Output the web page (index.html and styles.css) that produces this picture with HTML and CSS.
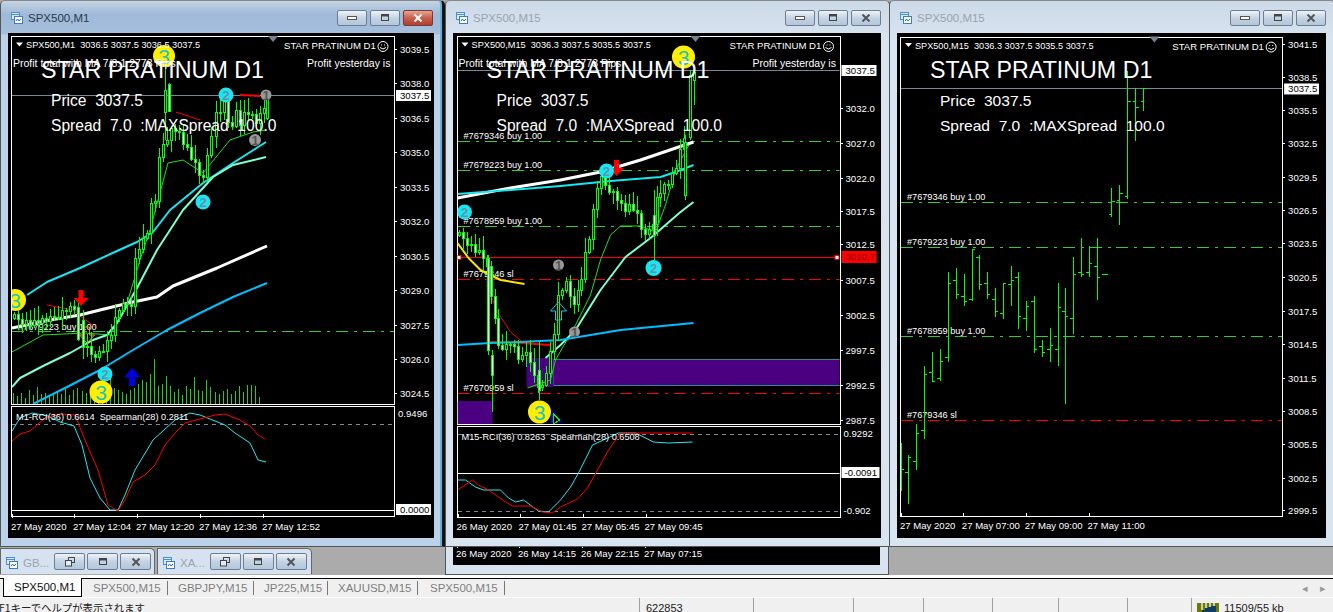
FILE: index.html

```html
<!DOCTYPE html>
<html lang="ja">
<head>
    <meta charset="UTF-8">
    <meta name="viewport" content="width=device-width, initial-scale=1.0">
    <title>SPX500 charts</title>
    <link rel="stylesheet" href="styles.css">
</head>
<body>
    <svg class="defs">
        <symbol id="win-icon" viewBox="0 0 12 12">
            <rect x="0.5" y="0.5" width="8" height="7" fill="#dfeaf7" stroke="#4a8fd0"/>
            <rect x="3.5" y="4.5" width="8" height="7" fill="#ffffff" stroke="#3a7fc4"/>
            <path d="M0.5 2.5h8" stroke="#4a8fd0"/>
            <path d="M5 9l1.5-2 1.5 2 2-2" fill="none" stroke="#2f6db0"/>
        </symbol>
        <symbol id="ic-min" viewBox="0 0 12 8"><rect x="1.5" y="2.5" width="9" height="3" fill="#fff" stroke="#555"/></symbol>
        <symbol id="ic-max" viewBox="0 0 12 8"><rect x="2.5" y="0.5" width="7" height="6" fill="none" stroke="#444"/><rect x="3" y="1" width="6" height="1.5" fill="#444"/></symbol>
        <symbol id="ic-close" viewBox="0 0 12 8"><path d="M2.5 0.5l7 7M9.5 0.5l-7 7" stroke="#555" stroke-width="2"/></symbol>
        <symbol id="ic-restore" viewBox="0 0 12 10"><rect x="4.5" y="0.5" width="6" height="5" fill="none" stroke="#444"/><rect x="1.5" y="3.5" width="6" height="5.5" fill="#e4edf6" stroke="#444"/></symbol>
    </svg>

    <div class="desktop">
        <div class="behind">
            <svg class="strip" id="strip2" viewBox="453 547 427 18"></svg>
        </div>

        <div class="window active win1">
            <div class="titlebar">
                <svg class="wicon"><use href="#win-icon"/></svg>
                <span class="wtitle">SPX500,M1</span>
                <div class="wbtns">
                    <span class="wbtn"><svg><use href="#ic-min"/></svg></span>
                    <span class="wbtn"><svg><use href="#ic-max"/></svg></span>
                    <span class="wbtn close"><svg><use href="#ic-close"/></svg></span>
                </div>
            </div>
            <svg class="chart" id="chart1" viewBox="8 33 426 505"></svg>
        </div>

        <div class="window win2">
            <div class="titlebar">
                <svg class="wicon"><use href="#win-icon"/></svg>
                <span class="wtitle">SPX500,M15</span>
                <div class="wbtns">
                    <span class="wbtn"><svg><use href="#ic-min"/></svg></span>
                    <span class="wbtn"><svg><use href="#ic-max"/></svg></span>
                    <span class="wbtn"><svg><use href="#ic-close"/></svg></span>
                </div>
            </div>
            <svg class="chart" id="chart2" viewBox="453 33 427 505"></svg>
        </div>

        <div class="window win3">
            <div class="titlebar">
                <svg class="wicon"><use href="#win-icon"/></svg>
                <span class="wtitle">SPX500,M15</span>
                <div class="wbtns">
                    <span class="wbtn"><svg><use href="#ic-min"/></svg></span>
                    <span class="wbtn"><svg><use href="#ic-max"/></svg></span>
                    <span class="wbtn"><svg><use href="#ic-close"/></svg></span>
                </div>
            </div>
            <svg class="chart" id="chart3" viewBox="898 33 430 505"></svg>
        </div>

        <div class="minimized">
            <div class="minwin">
                <svg class="wicon"><use href="#win-icon"/></svg>
                <span class="wtitle">GB...</span>
                <div class="wbtns">
                    <span class="wbtn"><svg><use href="#ic-restore"/></svg></span>
                    <span class="wbtn"><svg><use href="#ic-max"/></svg></span>
                    <span class="wbtn"><svg><use href="#ic-close"/></svg></span>
                </div>
            </div>
            <div class="minwin">
                <svg class="wicon"><use href="#win-icon"/></svg>
                <span class="wtitle">XA...</span>
                <div class="wbtns">
                    <span class="wbtn"><svg><use href="#ic-restore"/></svg></span>
                    <span class="wbtn"><svg><use href="#ic-max"/></svg></span>
                    <span class="wbtn"><svg><use href="#ic-close"/></svg></span>
                </div>
            </div>
        </div>
    </div>

    <div class="tabs">
        <span class="tab current">SPX500,M1</span>
        <span class="tab t1">SPX500,M15</span>
        <span class="tab t2">GBPJPY,M15</span>
        <span class="tab t3">JP225,M15</span>
        <span class="tab t4">XAUUSD,M15</span>
        <span class="tab t5">SPX500,M15</span>
        <span class="scroll">◂</span>
        <span class="scroll">▸</span>
    </div>

    <div class="status">
        <span class="cell help">F1キーでヘルプが表示されます</span>
        <span class="cell c1">622853</span>
        <span class="cell c2"></span>
        <span class="cell c3"></span>
        <span class="cell c4"></span>
        <span class="cell c5"></span>
        <span class="cell c6"></span>
        <span class="cell c7"></span>
        <span class="cell conn">
            <svg class="bars" viewBox="0 0 22 10">
                <rect x="0" y="0" width="22" height="10" fill="#6b7a00"/>
                <path d="M5 0v7M9 0v5M13 0v4M17 0v3" stroke="#e8e8e8" stroke-width="1.5"/>
                <path d="M5 10v-3h3v-2h3v-1h3v-1h5v7z" fill="#0f3d66"/>
            </svg>
            11509/55 kb
        </span>
    </div>

    <script src="script.js"></script>
</body>
</html>
```

FILE: styles.css

```css
html, body {margin: 0; padding: 0; width: 1333px; height: 612px; overflow: hidden; background: #f0f0f0;}
body {font-family: "Liberation Sans", Arial, sans-serif; font-size: 11px; color: #222;}
.defs {position: absolute; width: 0; height: 0;}

.desktop {position: relative; height: 575px; background: #ababab; border-bottom: 3px solid #fff; box-sizing: content-box;}

.window {position: absolute; top: 0; height: 547px; box-sizing: border-box; display: flex; flex-direction: column; background: linear-gradient(#ccd9e6 0, #d9e4f1 40px); border: 1px solid #555; border-top-color: #888; border-radius: 5px 5px 0 0; padding: 0 8px 8px 7px;}
.window.active {background: linear-gradient(#c3d3e3 0, #9fb9d8 14px, #a6bfdc 33px, #bcd2ea 34px); border-right: 3px solid #111; box-shadow: inset -2px 0 0 #58b7dc;}
.win1 {left: 0; width: 445px;}
.win2 {left: 445px; width: 445px;}
.win3 {left: 889px; width: 446px;}

.titlebar {flex: none; height: 32px; display: flex; align-items: center; gap: 5px; padding-left: 3px;}
.wicon {width: 12px; height: 12px; flex: none; margin-top: 2px;}
.wtitle {font-size: 11.5px; color: #9aa4ae; margin-top: 2px;}
.active .wtitle {color: #2b3a48;}
.wbtns {display: flex; gap: 3px; margin-left: auto; margin-top: 9px; margin-bottom: 7px;}
.win1 .wbtns {margin-right: 1px;}
.wbtn {width: 30px; height: 16px; display: flex; align-items: center; justify-content: center; border: 1px solid #6c7e93; border-radius: 2px; box-sizing: border-box; background: linear-gradient(#eef3f8, #c4d3e3 50%, #b4c6da);}
.wbtn svg {width: 12px; height: 8px;}
.wbtn.close {background: linear-gradient(#e6a593, #c8604c 50%, #ad3f30); border-color: #7a3a32;}
.wbtn.close svg {filter: brightness(3);}

.chart {flex: none; display: block; width: 100%; height: 505px; background: #000;}
.chart text, .strip text {font-family: "Liberation Sans", Arial, sans-serif; font-size: 9.6px; fill: #fff; white-space: pre;}
.chart text.big {font-size: 23.3px;}
.chart text.mid {font-size: 15.6px;}
.chart text.tight {font-size: 9.2px;}
.chart text.prof {font-size: 10.5px;}
.chart text.dark {fill: #000;}
.chart text.num {font-size: 13px; font-weight: bold; text-anchor: middle;}
.chart text.num3 {font-size: 21px; fill: #16c6c6; text-anchor: middle;}

.behind {position: absolute; left: 445px; top: 546px; width: 444px; height: 29px; box-sizing: border-box; background: #d9e4f1; border: 1px solid #555; border-top-color: #444; padding: 0 8px 9px 7px;}
.strip {display: block; width: 427px; height: 18px; background: #000;}

.frame {fill: none; stroke: #fff; shape-rendering: crispEdges;}
.tick {stroke: #fff; shape-rendering: crispEdges;}
.pline {fill: none; stroke-linejoin: round;}
.thin-lime {stroke: #22dd22; stroke-width: 1;}
.thin-red {stroke: #ff0000; stroke-width: 1;}
.cyan {stroke: #18e6f0; stroke-width: 2;}
.mint {stroke: #7fffd4; stroke-width: 2;}
.white {stroke: #fff; stroke-width: 3;}
.blue {stroke: #00bfff; stroke-width: 2;}
.yellow {stroke: #ffe600; stroke-width: 2;}
.red-fat {stroke: #ff0000; stroke-width: 2;}
.sub-cyan {stroke: #28e8f0; stroke-width: 1;}
.sub-red {stroke: #ff0000; stroke-width: 1;}
.price {stroke: #778899; shape-rendering: crispEdges;}
.hline-w {stroke: #fff; shape-rendering: crispEdges;}
.dash-g {stroke: #32cd32; stroke-dasharray: 12 6 3 6; shape-rendering: crispEdges;}
.dash-r {stroke: #ff0000; stroke-dasharray: 12 6 3 6; shape-rendering: crispEdges;}
.dash-k {stroke: #778899; stroke-dasharray: 4 4; shape-rendering: crispEdges;}
.solid-r {stroke: #ff0000; shape-rendering: crispEdges;}
.wick {stroke: #00ff00; shape-rendering: crispEdges;}
.vol {stroke: #22cc22; shape-rendering: crispEdges;}
.up {fill: #000; stroke: #00ff00; shape-rendering: crispEdges;}
.down {fill: #fff; stroke: #00ff00; shape-rendering: crispEdges;}
.zone {fill: #4b0082;}
.zone-edge {fill: #4b0082; stroke: #2e8b8b; shape-rendering: crispEdges;}
.box {fill: #fff;}
.box-red {fill: #ff0000;}
.handle {fill: #fff; stroke: #ff0000;}
.m-yellow {fill: #ffee00;}
.m-cyan {fill: #18e6f0;}
.m-grey {fill: #999;}
.smile {fill: none; stroke: #fff;}
.tri-w {fill: #fff;}
.tri-g {fill: #76838f;}
.a-red {fill: #ff0000;}
.a-blue {fill: #0000e0;}
.a-hollow-y {fill: none; stroke: #d8a020;}
.a-hollow-c {fill: none; stroke: #18c8f0;}

.minimized {position: absolute; left: 0; top: 548px; display: flex; gap: 2px;}
.minwin {width: 155px; height: 26px; box-sizing: border-box; display: flex; align-items: center; gap: 5px; padding: 0 4px 0 5px; background: #d6e2ef; border: 1px solid #666; border-bottom: 0; border-radius: 0 5px 0 0;}
.minwin .wbtns {margin: 0; gap: 2px;}
.minwin .wbtn {width: 31px; height: 17px;}
.minwin .wbtn svg {height: 10px;}

.tabs {position: relative; height: 18px; border-top: 1px solid #000; display: flex; align-items: center; background: #f0f0f0;}
.tab {position: absolute; top: 2px; height: 14px; line-height: 14px; font-size: 11.5px; color: #7f7f7f; padding-left: 10px; border-right: 1px solid #777;}
.tab.current {left: 3px; top: -1px; width: 67px; height: 18px; line-height: 19px; color: #111; background: #fff; border: 1px solid #000; border-top: 0; padding-left: 10px;}
.t1 {left: 83px; width: 74px;}
.t2 {left: 168px; width: 75px;}
.t3 {left: 254px; width: 63px;}
.t4 {left: 328px; width: 79px;}
.t5 {left: 420px; width: 74px;}
.scroll {position: absolute; top: 2px; font-size: 11px; color: #999; line-height: 14px;}
.scroll:nth-last-child(2) {left: 1302px;}
.scroll:last-child {left: 1320px;}

.status {position: relative; height: 15px; border-top: 1px solid #fff; background: #f0f0f0; overflow: hidden; border-bottom: 1px solid #666;}
.cell {position: absolute; top: 0; height: 15px; line-height: 21px; white-space: nowrap; border-left: 1px solid #a0a0a0; box-sizing: border-box; font-size: 11px;}
.cell.help {left: -1px; border-left: 0; font-family: "Noto Sans CJK JP", sans-serif; font-size: 10.4px; line-height: 20px;}
.c1 {left: 639px; width: 114px; padding-left: 6px;}
.c2 {left: 753px;}
.c3 {left: 853px;}
.c4 {left: 923px;}
.c5 {left: 992px;}
.c6 {left: 1058px;}
.c7 {left: 1127px;}
.conn {left: 1191px; padding-left: 5px; display: flex; gap: 5px; align-items: flex-start;}
.bars {width: 22px; height: 10px; margin-top: 5px; flex: none;}
```

FILE: script.js

```js
const NS = "http://www.w3.org/2000/svg";

function add(svg, tag, attrs, text) {
    const el = document.createElementNS(NS, tag);
    for (const k in attrs) el.setAttribute(k, attrs[k]);
    if (text !== undefined) el.textContent = text;
    svg.appendChild(el);
    return el;
}

function poly(svg, pts, cls) {
    add(svg, "polyline", { points: pts.map(p => p.join(",")).join(" "), class: "pline " + cls });
}

function hline(svg, x1, x2, y, cls) {
    add(svg, "line", { x1: x1, x2: x2, y1: y + 0.5, y2: y + 0.5, class: cls });
}

function label(svg, x, y, str, cls) {
    add(svg, "text", { x: x, y: y, class: cls || "" }, str);
}

// candles from a rough price path, plus a wick out of a small hash
function pathCandles(path, x0, x1, step) {
    const out = [];
    let prev = path[0][1];
    let i = 0;
    for (let x = x0; x <= x1; x += step) {
        let s = 0;
        while (s < path.length - 2 && path[s + 1][0] < x) s++;
        const a = path[s], b = path[s + 1];
        const c = Math.round(a[1] + (b[1] - a[1]) * (x - a[0]) / (b[0] - a[0]));
        const h = (i * 7919) % 13, l = (i * 104729) % 11;
        const jig = ((i * 31) % 9) - 4;
        const close = c + jig;
        out.push([x, Math.min(prev, close) - 2 - h, Math.max(prev, close) + 2 + l, prev, close]);
        prev = close;
        i++;
    }
    return out;
}

function drawCandles(svg, list) {
    list.forEach(c => {
        const x = Math.round(c[0]) + 0.5;
        add(svg, "line", { x1: x, x2: x, y1: c[1], y2: c[2], class: "wick" });
        const top = Math.min(c[3], c[4]), bot = Math.max(c[3], c[4]);
        add(svg, "rect", { x: x - 1, y: top + 0.5, width: 2, height: Math.max(bot - top, 1), class: c[4] > c[3] ? "down" : "up" });
    });
}

function drawBars(svg, list) {
    list.forEach(c => {
        const x = Math.round(c[0]) + 0.5;
        add(svg, "line", { x1: x, x2: x, y1: c[1], y2: c[2], class: "wick" });
        add(svg, "line", { x1: x - 3, x2: x, y1: c[3] + 0.5, y2: c[3] + 0.5, class: "wick" });
        add(svg, "line", { x1: x, x2: x + 3, y1: c[4] + 0.5, y2: c[4] + 0.5, class: "wick" });
    });
}

function marker(svg, x, y, r, kind, n) {
    add(svg, "circle", { cx: x, cy: y, r: r, class: "m-" + kind });
    if (kind === "yellow") label(svg, x, y + 7.5, n, "num3");
    else add(svg, "text", { x: x, y: y + 4.5, class: "num", style: "fill:" + (kind === "grey" ? "#555" : "#6a8fa8") }, n);
}

function arrowDown(svg, x, y, cls) {
    add(svg, "path", { d: `M${x - 2.5} ${y}h5v8h5l-7.5 8-7.5-8h5z`, class: cls });
}

function arrowUp(svg, x, y, cls) {
    add(svg, "path", { d: `M${x} ${y}l8 9h-5v9h-6v-9h-5z`, class: cls });
}

function axis(svg, right, list) {
    list.forEach(a => {
        hline(svg, right, right + 3, a[1], "tick");
        label(svg, right + 6, a[1] + 4, a[0]);
    });
}

function timeAxis(svg, y, list) {
    list.forEach(t => {
        add(svg, "line", { x1: t[0] + 0.5, x2: t[0] + 0.5, y1: y - 3, y2: y + 1, class: "tick" });
        label(svg, t[0] - 1, y + 13, t[1]);
    });
}

// what all three charts share on top of the data
function overlay(svg, o) {
    const l = o.left;
    add(svg, "path", { d: `M${l + 5} 42.5h7l-3.5 4z`, class: "tri-w" });
    label(svg, l + 15, 48, o.head, "tight");
    add(svg, "path", { d: `M${o.notch - 5} 36h10l-5 6z`, class: "tri-g" });
    label(svg, o.right - 110, 49, "STAR PRATINUM D1");
    add(svg, "circle", { cx: o.right - 11, cy: 46.5, r: 5, class: "smile" });
    add(svg, "path", { d: `M${o.right - 14} 47.5q3 3 6 0M${o.right - 13} 45h1M${o.right - 10} 45h1`, class: "smile" });
    if (o.profit) {
        label(svg, l + 2, 67, "Profit total with MA 7/8.1 2773 Pips", "prof");
        add(svg, "text", { x: l + 296, y: 67, class: "prof", "clip-path": `url(#${svg.id}-main)` }, "Profit yesterday is");
    }
    label(svg, l + 30, 78, "STAR PRATINUM D1", "big");
    label(svg, l + 40, 106, "Price  3037.5", "mid");
    label(svg, l + 40, 131, "Spread  7.0  :MAXSpread  100.0", "mid");
}

function clip(svg, id, x, y, w, h) {
    const c = add(svg, "clipPath", { id: svg.id + id });
    add(c, "rect", { x: x, y: y, width: w, height: h });
    return `url(#${svg.id + id})`;
}

function group(svg, clipUrl) {
    return add(svg, "g", { "clip-path": clipUrl });
}

/* ---------- chart 1, SPX500,M1 ---------- */
const c1 = document.getElementById("chart1");
const c1main = clip(c1, "-main", 12, 37, 382, 367);

add(c1, "rect", { x: 11.5, y: 36.5, width: 383, height: 368, class: "frame" });
add(c1, "rect", { x: 11.5, y: 406.5, width: 383, height: 110, class: "frame" });

const g1 = group(c1, c1main);
hline(g1, 12, 394, 95, "price");
hline(g1, 12, 394, 331, "dash-g");
label(g1, 18, 330, "#7679223 buy 1.00", "tight");

const vols = [11, 8, 11, 6, 14, 9, 17, 10, 11, 8, 9, 12, 10, 15, 9, 14, 16, 13, 11, 9, 7, 20, 14, 12, 28, 16, 14, 12, 10, 14, 16, 20, 24, 22, 30, 45, 18, 20, 28, 18, 12, 15, 9, 18, 15, 27, 14, 13, 24, 17, 12, 10, 13, 15, 10, 13, 18, 12, 19, 19, 18, 7];
vols.forEach((v, i) => {
    const x = 13.5 + Math.round(i * 4.03);
    add(g1, "line", { x1: x, x2: x, y1: 404, y2: 404 - v, class: "vol" });
});

poly(g1, [[12, 352], [43, 335], [85, 333], [110, 335], [125, 310], [140, 260], [150, 230], [168, 163], [183, 160], [203, 173], [230, 140], [253, 132], [266, 130]], "thin-lime");
poly(g1, [[47, 305], [73, 310], [83, 318], [95, 327]], "thin-red");
poly(g1, [[176, 112], [200, 120]], "thin-red");
poly(g1, [[240, 95], [260, 96]], "red-fat");
poly(g1, [[27, 295], [47, 282], [80, 268], [117, 251], [137, 242], [153, 232], [170, 210], [203, 183], [233, 163], [266, 142]], "cyan");
poly(g1, [[12, 387], [20, 378], [45, 365], [70, 353], [93, 340], [107, 335], [117, 323], [137, 288], [157, 250], [183, 210], [213, 177], [233, 165], [266, 157]], "mint");
poly(g1, [[12, 328], [50, 320], [80, 315], [100, 310], [133, 302], [157, 297], [173, 286], [217, 268], [267, 246]], "white");
poly(g1, [[33, 404], [67, 387], [100, 370], [133, 350], [167, 330], [200, 313], [233, 297], [267, 283]], "blue");

const path1 = [[14, 318], [30, 322], [50, 320], [66, 308], [76, 307], [82, 345], [90, 354], [100, 352], [105, 345], [110, 335], [118, 310], [125, 305], [131, 302], [134, 262], [140, 242], [146, 238], [150, 208], [156, 198], [160, 150], [173, 125], [180, 135], [185, 145], [190, 155], [195, 165], [200, 176], [205, 172], [210, 140], [215, 115], [220, 110], [225, 100], [230, 140], [235, 108], [240, 122], [245, 110], [250, 112], [255, 122], [260, 116], [267, 100]];
drawCandles(g1, pathCandles(path1, 14, 267, 4.03));
drawCandles(g1, [[78, 303, 341, 307, 339], [165, 62, 140, 112, 90], [169, 83, 112, 84, 111], [267, 95, 120, 118, 96]]);

arrowDown(g1, 81, 290, "a-red");
arrowUp(g1, 132, 368, "a-blue");
arrowDown(g1, 87, 327, "a-hollow-y");
marker(g1, 164, 56, 11, "yellow", "3");
marker(g1, 226, 95, 7.5, "cyan", "2");
marker(g1, 266, 95, 5.5, "grey", "1");
marker(g1, 255, 140, 6, "grey", "1");
marker(g1, 203, 202, 7.5, "cyan", "2");
marker(g1, 15, 300, 11, "yellow", "3");
marker(g1, 105, 374, 7.5, "cyan", "2");
marker(g1, 101, 392, 11.5, "yellow", "3");

const sub1 = group(c1, clip(c1, "-sub", 12, 407, 382, 110));
hline(sub1, 12, 394, 424, "dash-k");
hline(sub1, 12, 394, 510, "hline-w");
poly(sub1, [[12, 431], [20, 418], [32, 413], [48, 416], [60, 422], [74, 426], [82, 445], [90, 478], [100, 498], [110, 510], [118, 510], [125, 495], [135, 470], [153, 440], [175, 420], [190, 413], [200, 415], [225, 425], [235, 433], [250, 443], [258, 460], [266, 462]], "sub-cyan");
poly(sub1, [[12, 441], [20, 434], [30, 431], [45, 418], [60, 414], [75, 415], [85, 440], [98, 470], [108, 505], [118, 511], [125, 500], [133, 482], [145, 475], [155, 465], [165, 445], [175, 433], [185, 423], [200, 419], [215, 415], [225, 414], [240, 420], [250, 426], [258, 435], [265, 439]], "sub-red");
label(sub1, 16, 420, "M1-RCI(36) 0.6614  Spearman(28) 0.2811", "tight");

overlay(c1, { left: 11, right: 394, notch: 273, head: "SPX500,M1  3036.5 3037.5 3036.5 3037.5", profit: true });
axis(c1, 394, [["3039.5", 49], ["3038.0", 83], ["3036.5", 118], ["3035.0", 152], ["3033.5", 187], ["3032.0", 221], ["3030.5", 256], ["3029.0", 290], ["3027.5", 325], ["3026.0", 359], ["3024.5", 393]]);
add(c1, "rect", { x: 396, y: 90, width: 35, height: 11, class: "box" });
label(c1, 400, 99, "3037.5", "dark");
label(c1, 398, 417, "0.9496");
add(c1, "rect", { x: 396, y: 504, width: 35, height: 11, class: "box" });
label(c1, 400, 513, "0.0000", "dark");
timeAxis(c1, 517, [[12, "27 May 2020"], [74, "27 May 12:04"], [137, "27 May 12:20"], [200, "27 May 12:36"], [263, "27 May 12:52"]]);

/* ---------- chart 2, SPX500,M15 ---------- */
const c2 = document.getElementById("chart2");
const c2main = clip(c2, "-main", 457, 37, 382, 387);

add(c2, "rect", { x: 456.5, y: 36.5, width: 383, height: 388, class: "frame" });
add(c2, "rect", { x: 456.5, y: 426.5, width: 383, height: 91, class: "frame" });

const g2 = group(c2, c2main);
add(g2, "rect", { x: 552.5, y: 359.5, width: 287, height: 26, class: "zone-edge" });
add(g2, "rect", { x: 526, y: 358, width: 27, height: 29, class: "zone" });
add(g2, "rect", { x: 457, y: 401, width: 35, height: 23, class: "zone" });
hline(g2, 457, 839, 70, "price");
hline(g2, 457, 839, 141, "dash-g");
hline(g2, 457, 839, 170, "dash-g");
hline(g2, 457, 839, 226, "dash-g");
hline(g2, 457, 839, 257, "solid-r");
hline(g2, 457, 839, 279, "dash-r");
hline(g2, 457, 839, 393, "dash-r");
label(g2, 463, 139, "#7679346 buy 1.00", "tight");
label(g2, 463, 168, "#7679223 buy 1.00", "tight");
label(g2, 463, 224, "#7678959 buy 1.00", "tight");
label(g2, 463, 277, "#7679346 sl", "tight");
label(g2, 463, 391, "#7670959 sl", "tight");
add(g2, "rect", { x: 456.5, y: 255.5, width: 4, height: 4, class: "handle" });
add(g2, "rect", { x: 834.5, y: 255.5, width: 4, height: 4, class: "handle" });

poly(g2, [[457, 243], [468, 258], [480, 270], [500, 280], [524, 284]], "yellow");
poly(g2, [[486, 285], [497, 312], [510, 332], [522, 342]], "thin-red");
poly(g2, [[488, 342], [520, 343], [550, 345]], "red-fat");
poly(g2, [[527, 388], [550, 380], [555, 360], [575, 325], [590, 295], [600, 260], [610, 235], [620, 226], [640, 226], [655, 232], [665, 205], [675, 170], [690, 142]], "thin-lime");
poly(g2, [[457, 198], [510, 188], [560, 180], [600, 172], [640, 160], [693, 142]], "white");
poly(g2, [[457, 194], [510, 190], [560, 186], [610, 181], [660, 177], [675, 172], [693, 165]], "cyan");
poly(g2, [[545, 358], [560, 345], [575, 330], [600, 290], [625, 257], [650, 238], [680, 212], [693, 202]], "mint");
poly(g2, [[457, 345], [490, 343], [520, 342], [560, 340], [620, 330], [693, 323]], "blue");

const path2 = [[457, 235], [465, 240], [475, 250], [484, 258], [497, 345], [505, 345], [510, 340], [516, 355], [520, 360], [525, 350], [530, 370], [535, 378], [540, 390], [545, 370], [552, 340], [556, 300], [560, 290], [565, 285], [570, 300], [574, 300], [578, 285], [582, 270], [585, 250], [590, 230], [595, 190], [600, 180], [604, 185], [610, 190], [615, 195], [620, 205], [625, 210], [630, 205], [635, 215], [640, 230], [650, 230], [655, 200], [660, 190], [665, 185], [670, 180], [675, 170], [680, 140], [685, 138]];
drawCandles(g2, pathCandles(path2, 458, 686, 3.95));
drawCandles(g2, [[487, 255, 355, 258, 350], [491, 350, 412, 355, 375], [538, 342, 400, 370, 390], [653, 190, 262, 215, 235], [684, 135, 200, 195, 142], [689, 70, 140, 137, 75], [693, 68, 105, 80, 72]]);

arrowDown(g2, 616, 160, "a-red");
arrowUp(g2, 558, 302, "a-hollow-c");
add(g2, "path", { d: "M550 408l12 14-12 2z", class: "a-blue" });
add(g2, "path", { d: "M553 414l6 6-6 4z", class: "wick" });
marker(g2, 683, 57, 11.5, "yellow", "3");
marker(g2, 606, 171, 7.5, "cyan", "2");
marker(g2, 464, 212, 7.5, "cyan", "2");
marker(g2, 558, 265, 5.5, "grey", "1");
marker(g2, 574, 332, 5.5, "grey", "1");
marker(g2, 653, 268, 8, "cyan", "2");
marker(g2, 539, 412, 11.5, "yellow", "3");

const sub2 = group(c2, clip(c2, "-sub", 457, 427, 382, 91));
hline(sub2, 457, 839, 434, "dash-k");
hline(sub2, 457, 839, 511, "dash-k");
hline(sub2, 457, 839, 473, "hline-w");
poly(sub2, [[457, 480], [465, 480], [475, 487], [483, 490], [500, 490], [508, 498], [515, 502], [523, 500], [538, 511], [548, 512], [560, 500], [570, 487], [578, 473], [592, 445], [605, 439], [618, 433], [635, 433], [653, 442], [668, 443], [692, 442]], "sub-cyan");
poly(sub2, [[457, 490], [472, 480], [478, 485], [488, 490], [502, 500], [512, 506], [530, 506], [542, 512], [552, 513], [560, 507], [577, 499], [587, 488], [608, 450], [620, 433], [652, 433], [692, 433]], "sub-red");
label(sub2, 461, 440, "M15-RCI(36) 0.8263  Spearman(28) 0.6508", "tight");

overlay(c2, { left: 456, right: 839, notch: 695, head: "SPX500,M15  3036.3 3037.5 3035.5 3037.5", profit: true });
axis(c2, 839, [["3032.0", 108], ["3027.0", 143], ["3022.0", 178], ["3017.5", 211], ["3012.5", 244], ["3007.5", 280], ["3002.5", 315], ["2997.5", 350], ["2992.5", 385], ["2987.5", 420]]);
add(c2, "rect", { x: 841, y: 65, width: 35, height: 11, class: "box" });
label(c2, 845, 74, "3037.5", "dark");
add(c2, "rect", { x: 841, y: 251, width: 35, height: 12, class: "box-red" });
add(c2, "text", { x: 845, y: 260, style: "fill:#7a0000" }, "3010.7");
label(c2, 843, 437, "0.9292");
add(c2, "rect", { x: 841, y: 467, width: 38, height: 11, class: "box" });
label(c2, 844, 476, "-0.0091", "dark");
label(c2, 843, 514, "-0.902");
timeAxis(c2, 517, [[457, "26 May 2020"], [519, "27 May 01:45"], [582, "27 May 05:45"], [645, "27 May 09:45"]]);

const strip = document.getElementById("strip2");
[[457, "26 May 2020"], [519, "26 May 14:15"], [582, "26 May 22:15"], [645, "27 May 07:15"]].forEach(t => {
    add(strip, "line", { x1: t[0] + 0.5, x2: t[0] + 0.5, y1: 547, y2: 548, class: "tick" });
    label(strip, t[0] - 1, 557, t[1]);
});

/* ---------- chart 3, SPX500,M15 bars ---------- */
const c3 = document.getElementById("chart3");
const c3main = clip(c3, "-main", 902, 37, 382, 480);

add(c3, "rect", { x: 901.5, y: 36.5, width: 383, height: 481, class: "frame" });

const g3 = group(c3, c3main);
hline(g3, 902, 1284, 88, "price");
hline(g3, 902, 1284, 202, "dash-g");
hline(g3, 902, 1284, 247, "dash-g");
hline(g3, 902, 1284, 336, "dash-g");
hline(g3, 902, 1284, 420, "dash-r");
label(g3, 908, 200, "#7679346 buy 1.00", "tight");
label(g3, 908, 245, "#7679223 buy 1.00", "tight");
label(g3, 908, 334, "#7678959 buy 1.00", "tight");
label(g3, 908, 418, "#7679346 sl", "tight");

// x, high, low, open, close as read off the picture
drawBars(g3, [
    [902, 443, 491, 469, 469], [909, 455, 505, 472, 457], [917, 424, 470, 461, 433], [925, 366, 439, 430, 374],
    [933, 352, 381, 372, 381], [941, 349, 381, 378, 361], [949, 272, 362, 357, 283], [957, 268, 299, 280, 294],
    [965, 274, 306, 296, 301], [973, 249, 301, 299, 249], [980, 255, 290, 257, 284], [988, 272, 299, 283, 294],
    [996, 288, 317, 299, 311], [1004, 283, 319, 313, 283], [1012, 266, 306, 284, 280], [1019, 272, 329, 277, 316],
    [1027, 301, 331, 318, 306], [1035, 296, 353, 301, 349], [1043, 340, 357, 346, 352], [1051, 328, 362, 349, 345],
    [1059, 283, 366, 349, 307], [1066, 288, 404, 311, 316], [1074, 257, 334, 318, 274], [1082, 238, 277, 272, 274],
    [1090, 246, 277, 272, 263], [1098, 238, 300, 266, 277], [1106, 274, 274, 274, 274], [1113, 188, 217, 214, 201],
    [1121, 185, 225, 200, 193], [1129, 70, 199, 196, 101], [1137, 88, 141, 101, 107], [1145, 88, 111, 101, 88]
]);

overlay(c3, { left: 901, right: 1284, notch: 1156, head: "SPX500,M15  3036.3 3037.5 3035.5 3037.5", profit: false });
axis(c3, 1284, [["3041.5", 43], ["3038.5", 77], ["3035.5", 110], ["3032.5", 143], ["3029.5", 177], ["3026.5", 210], ["3023.5", 243], ["3020.5", 277], ["3017.5", 311], ["3014.5", 344], ["3011.5", 378], ["3008.5", 411], ["3005.5", 444], ["3002.5", 478], ["2999.5", 511]]);
add(c3, "rect", { x: 1286, y: 83, width: 35, height: 11, class: "box" });
label(c3, 1290, 92, "3037.5", "dark");
timeAxis(c3, 517, [[902, "27 May 2020"], [964, "27 May 07:00"], [1027, "27 May 09:00"], [1090, "27 May 11:00"]]);
```
